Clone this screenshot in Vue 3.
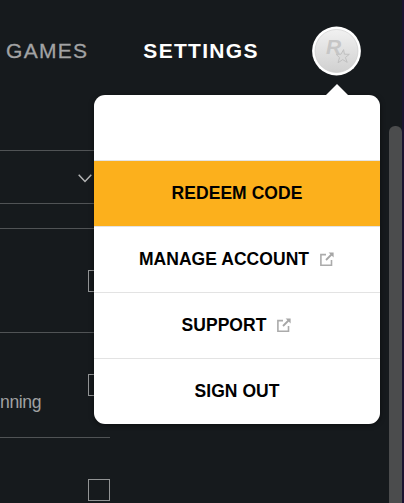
<script setup>
import { ref } from 'vue';

const menuOpen = ref(true);
const active = ref('redeem');

const items = [
  { id: 'redeem', label: 'REDEEM CODE', external: false },
  { id: 'account', label: 'MANAGE ACCOUNT', external: true },
  { id: 'support', label: 'SUPPORT', external: true },
  { id: 'signout', label: 'SIGN OUT', external: false }
];

const options = ref([
  { id: 1, text: '', checked: false },
  { id: 2, text: 'nning', checked: false },
  { id: 3, text: '', checked: false }
]);
</script>

<template>
  <div class="launcher">
    <header class="topbar">
      <nav class="tabs">
        <a class="tab games">GAMES</a>
        <a class="tab current">SETTINGS</a>
      </nav>
      <button type="button" class="avatar" aria-label="Account" @click="menuOpen = !menuOpen">
        <svg width="50" height="50" viewBox="0 0 50 50">
          <defs>
            <linearGradient id="disc" x1="0" y1="0" x2="0" y2="1">
              <stop offset="0" stop-color="#f1f1f1" />
              <stop offset="1" stop-color="#d0d0d0" />
            </linearGradient>
          </defs>
          <circle cx="25.5" cy="25" r="24.4" fill="#fff" />
          <circle cx="25.5" cy="25" r="21.5" fill="url(#disc)" stroke="#c8c8c8" stroke-width="0.6" />
          <text x="15" y="28.4" class="mark">R</text>
          <path d="M32.6 23.6 L33.4 28.2 L38.3 28.3 L34.4 31.5 L36.2 36.3 L31.7 33.6 L27 36.8 L28.5 31.6 L25.2 28.4 L30 28.2 Z" fill="#dadada" stroke="#c0c0c0" stroke-width="1" />
        </svg>
      </button>
    </header>

    <main class="settings">
      <div class="select">
        <svg width="14" height="9" viewBox="0 0 14 9">
          <path d="M0.7 0.8 L7 7.4 L13.3 0.8" fill="none" stroke="#b4b5b5" stroke-width="1.5" />
        </svg>
      </div>
      <div class="options">
        <div v-for="option in options" :key="option.id" class="option">
          <span class="hint">{{ option.text }}</span>
          <span class="box" @click="option.checked = !option.checked"></span>
        </div>
      </div>
    </main>

    <div class="scrollbar"></div>
    <div class="edge"></div>

    <div v-if="menuOpen" class="menu">
      <div class="username"></div>
      <a
        v-for="item in items"
        :key="item.id"
        class="item"
        :class="{ active: active === item.id }"
        @mouseenter="active = item.id"
      >
        <span>{{ item.label }}</span>
        <svg v-if="item.external" class="external" width="16" height="15" viewBox="0 0 16 15">
          <path d="M7 2.6 H1.9 V13.2 H12.5 V8" fill="none" stroke="#ababab" stroke-width="1.6" />
          <path d="M7 8 L13 2" fill="none" stroke="#a6a6a6" stroke-width="1.8" />
          <path d="M9.6 0.5 H14.6 V5.5 Z" fill="#a6a6a6" />
        </svg>
      </a>
    </div>
  </div>
</template>

<style>
body {
  margin: 0;
  background: #161a1d;
}
</style>

<style scoped>
.launcher {
  position: relative;
  width: 404px;
  height: 503px;
  overflow: hidden;
  background: #161a1d;
  font-family: "Liberation Sans", Arial, sans-serif;
}

.topbar {
  display: flex;
  justify-content: space-between;
  height: 102px;
  padding: 0 43px 0 6px;
}

.tabs {
  display: flex;
  gap: 55px;
  height: 101px;
  align-items: center;
}

.tab {
  font-size: 21px;
  line-height: 24px;
  letter-spacing: 1.3px;
  color: #a2a3a4;
}

.tab.games {
  -webkit-text-stroke: 0.3px #a2a3a4;
}

.tab.current {
  color: #fff;
  font-weight: bold;
}

.avatar {
  width: 50px;
  height: 50px;
  margin-top: 26px;
  padding: 0;
  border: 0;
  background: none;
  border-radius: 50%;
}

.avatar svg {
  display: block;
}

.mark {
  font: italic bold 21px "Liberation Sans", Arial, sans-serif;
  fill: #c6c6c6;
}

.settings {
  width: 110px;
  padding-top: 48px;
}

.select {
  display: flex;
  align-items: center;
  justify-content: flex-end;
  box-sizing: border-box;
  height: 54px;
  padding: 3px 18px 0 0;
  border-top: 1px solid #505355;
  border-bottom: 1px solid #505355;
}

.options {
  margin-top: 24px;
}

.option {
  display: flex;
  justify-content: space-between;
  box-sizing: border-box;
  height: 104.4px;
  padding-top: 41px;
  border-top: 1px solid #505355;
}

.hint {
  margin-top: 18px;
  font-size: 17.6px;
  line-height: 20px;
  letter-spacing: -0.4px;
  color: #a0a1a2;
}

.box {
  box-sizing: border-box;
  width: 22px;
  height: 22px;
  border: 1px solid #929495;
}

.scrollbar {
  position: absolute;
  top: 126px;
  right: 2px;
  bottom: -10px;
  width: 13px;
  border-radius: 6px;
  background: #4b4c4d;
}

.edge {
  position: absolute;
  top: 0;
  right: 0;
  bottom: 0;
  width: 2px;
  background: #1b1230;
}

.menu {
  position: absolute;
  top: 95px;
  left: 94px;
  width: 286px;
  height: 329px;
  border-radius: 11px;
  background: #fff;
  box-shadow: 0 1px 5px rgba(0, 0, 0, 0.5);
}

.menu::before {
  content: "";
  position: absolute;
  top: -11px;
  left: 232px;
  border: 11px solid transparent;
  border-top: 0;
  border-bottom-color: #fff;
}

.username {
  height: 65px;
}

.item {
  display: flex;
  align-items: center;
  justify-content: center;
  box-sizing: border-box;
  height: 66px;
  padding-bottom: 1px;
  border-top: 1px solid #e3e3e3;
  color: #000;
  font-size: 17.5px;
  font-weight: bold;
  letter-spacing: 0.05px;
  cursor: pointer;
}

.item.active {
  background: #fcb01c;
}

.external {
  margin: 1px 0 0 10px;
}
</style>
